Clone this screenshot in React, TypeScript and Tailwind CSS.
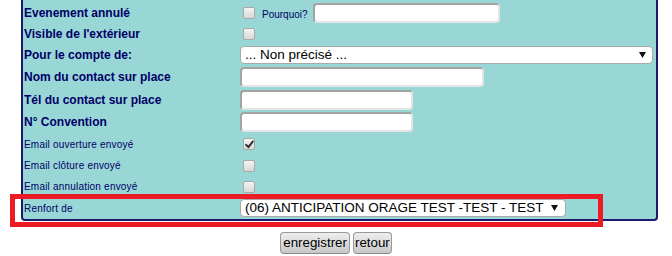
import React from "react";

const font = { fontFamily: '"Liberation Sans", Arial, sans-serif' };

function Checkbox({ checked = false }: { checked?: boolean }) {
  return (
    <div className="ml-[3px] w-[12px] h-[12px] rounded-[2px] border border-[#a8a8a8] bg-gradient-to-b from-[#f4f4f4] to-[#d8d8d8] flex items-center justify-center">
      {checked && (
        <svg width="9" height="9" viewBox="0 0 9 9">
          <path d="M1.2 4.8 L3.4 7.2 L7.9 1.4" stroke="#2a2a2a" strokeWidth="1.9" fill="none" strokeLinecap="round" strokeLinejoin="round" />
        </svg>
      )}
    </div>
  );
}

function TextInput({ w }: { w: string }) {
  return (
    <div
      className={`${w} h-[20px] bg-white rounded-[4px] border-2 border-t-[#a3a3a3] border-l-[#a3a3a3] border-b-[#e4e4e4] border-r-[#e4e4e4]`}
    />
  );
}

function Arrow() {
  return (
    <svg width="7" height="6" viewBox="0 0 7 6">
      <path d="M0 0 H7 L3.5 6 Z" fill="#111" />
    </svg>
  );
}

function Select({ w, text, pr }: { w: string; text: string; pr: string }) {
  return (
    <div
      className={`${w} h-[18px] bg-white rounded-[4px] border border-[#a9a9a9] flex items-center justify-between pl-[4px] ${pr} text-[13.5px] text-black leading-none`}
    >
      <span className="whitespace-nowrap">{text}</span>
      <Arrow />
    </div>
  );
}

function Row({
  h,
  label,
  small = false,
  children,
}: {
  h: string;
  label: string;
  small?: boolean;
  children?: React.ReactNode;
}) {
  return (
    <div className={`flex items-center ${h}`}>
      <div
        className={`w-[217px] pl-[1px] text-[#000066] whitespace-nowrap ${
          small ? "text-[10px] tracking-[0.2px]" : "text-[12px] font-bold"
        }`}
      >
        {label}
      </div>
      <div className="flex items-center">{children}</div>
    </div>
  );
}

export default function App() {
  return (
    <div className="relative w-[672px] h-[256px] bg-white overflow-hidden" style={font}>
      <div className="ml-[21px] w-[637px] h-[221px] bg-[#99d6d6] border-l-2 border-r-2 border-b-2 border-[#1b1b6f] rounded-b-[4px] pt-[2px]">
        <Row h="h-[22px]" label="Evenement annulé">
          <Checkbox />
          <span className="ml-[7px] mt-[3px] text-[10px] text-[#000066]">Pourquoi?</span>
          <div className="ml-[5px]">
            <TextInput w="w-[187px]" />
          </div>
        </Row>
        <Row h="h-[20px]" label="Visible de l'extérieur">
          <Checkbox />
        </Row>
        <Row h="h-[22px]" label="Pour le compte de:">
          <Select w="w-[413px]" text="... Non précisé ..." pr="pr-[6px]" />
        </Row>
        <Row h="h-[22px]" label="Nom du contact sur place">
          <TextInput w="w-[244px]" />
        </Row>
        <Row h="h-[23px]" label="Tél du contact sur place">
          <TextInput w="w-[173px]" />
        </Row>
        <Row h="h-[22px]" label="N° Convention">
          <TextInput w="w-[173px]" />
        </Row>
        <Row h="h-[22px]" label="Email ouverture envoyé" small>
          <Checkbox checked />
        </Row>
        <Row h="h-[21px]" label="Email clôture envoyé" small>
          <Checkbox />
        </Row>
        <Row h="h-[21px]" label="Email annulation envoyé" small>
          <Checkbox />
        </Row>
        <Row h="h-[22px]" label="Renfort de" small>
          <Select w="w-[326px]" text="(06) ANTICIPATION ORAGE TEST -TEST - TEST" pr="pr-[7px]" />
        </Row>
      </div>

      <div className="mt-[11px] flex justify-center gap-[3px]">
        <button className="h-[22px] px-[2px] rounded-[4px] border border-[#999] border-b-[#8a8a8a] bg-gradient-to-b from-[#eeeeee] to-[#c8c8c8] text-[13.33px] text-black leading-none">
          enregistrer
        </button>
        <button className="h-[22px] px-[1px] rounded-[4px] border border-[#999] border-b-[#8a8a8a] bg-gradient-to-b from-[#eeeeee] to-[#c8c8c8] text-[13.33px] text-black leading-none">
          retour
        </button>
      </div>

      <div className="absolute left-[10px] top-[194px] w-[593px] h-[33px] border-[5px] border-[#ed1c24]" />
    </div>
  );
}
